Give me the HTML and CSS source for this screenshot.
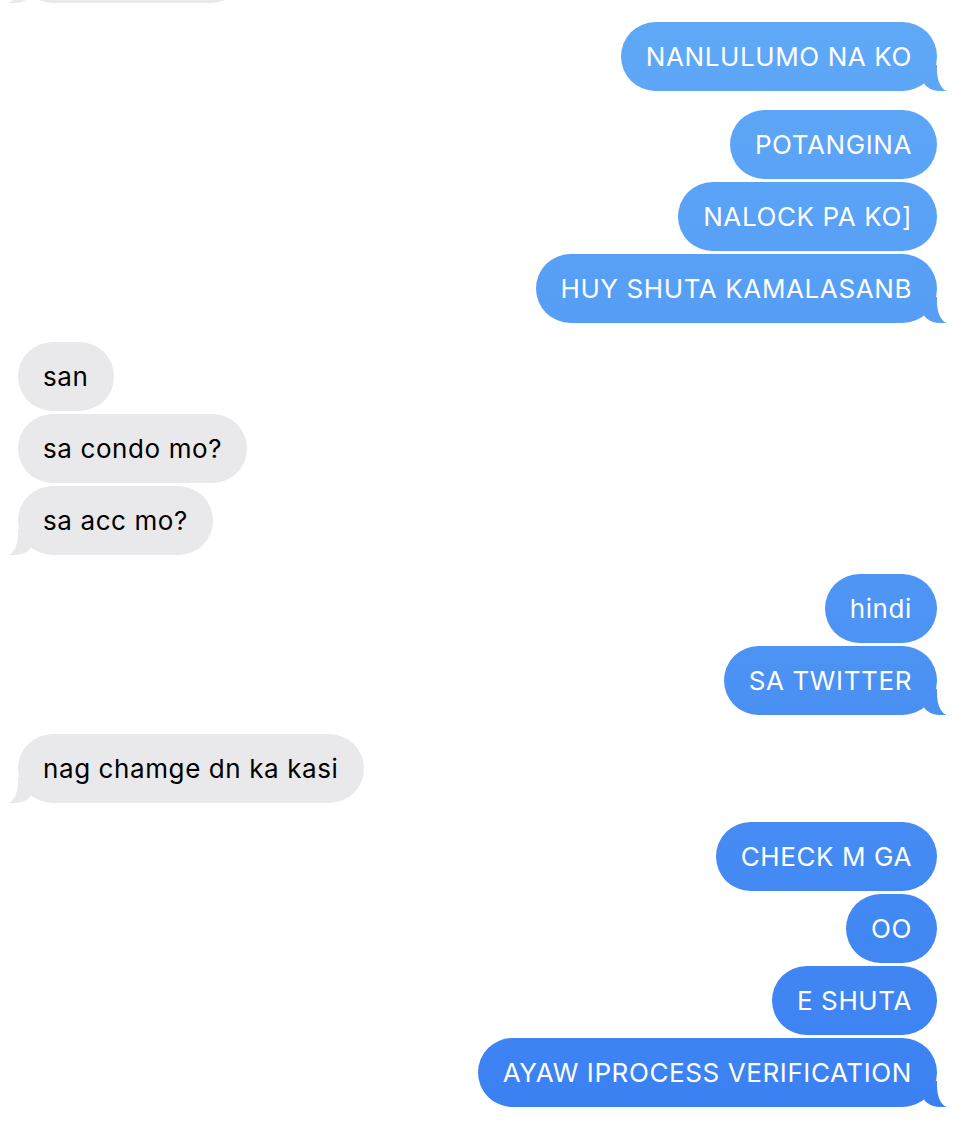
FILE: index.html
```html
<!DOCTYPE html>
<html lang="en">
<head>
<meta charset="UTF-8">
<meta name="viewport" content="width=device-width, initial-scale=1.0">
<title>Messages</title>
<link rel="stylesheet" href="styles.css">
</head>
<body>

  <div class="thread">
    <div class="group received offscreen">
      <div class="bubble tail"></div>
    </div>

    <div class="group sent">
      <div class="bubble tail">NANLULUMO NA KO</div>
    </div>

    <div class="group sent">
      <div class="bubble">POTANGINA</div>
      <div class="bubble">NALOCK PA KO]</div>
      <div class="bubble tail">HUY SHUTA KAMALASANB</div>
    </div>

    <div class="group received">
      <div class="bubble">san</div>
      <div class="bubble">sa condo mo?</div>
      <div class="bubble tail">sa acc mo?</div>
    </div>

    <div class="group sent">
      <div class="bubble">hindi</div>
      <div class="bubble tail">SA TWITTER</div>
    </div>

    <div class="group received">
      <div class="bubble tail">nag chamge dn ka kasi</div>
    </div>

    <div class="group sent">
      <div class="bubble">CHECK M GA</div>
      <div class="bubble">OO</div>
      <div class="bubble">E SHUTA</div>
      <div class="bubble tail">AYAW IPROCESS VERIFICATION</div>
    </div>
  </div>

</body>
</html>
```

FILE: styles.css
```css
* {
  box-sizing: border-box;
  margin: 0;
  padding: 0;
}

body {
  font-family: Inter, "Liberation Sans", Arial, sans-serif;
  background-color: #fff;
  overflow: hidden;
}

/* Thread */

.thread {
  display: flex;
  flex-direction: column;
  gap: 19px;
  padding: 0 39px 0 18px;
  margin-top: -66px;
}

.group {
  display: flex;
  flex-direction: column;
  gap: 3px;
}

.group.sent {
  align-items: flex-end;
}

.group.received {
  align-items: flex-start;
}

/* Bubbles */

.bubble {
  position: relative;
  height: 69px;
  line-height: 69px;
  padding: 0 25px 0 25px;
  border-radius: 35px;
  font-size: 26px;
  letter-spacing: 0.6px;
  white-space: nowrap;
}

.sent .bubble {
  color: #fff;
  background: linear-gradient(to bottom, #60a9f7 0%, #4d94f4 55%, #3b80f2 100%) fixed;
}

.received .bubble {
  color: #000;
  background-color: #e9e9eb;
}

.offscreen .bubble {
  width: 228px;
}

/* Tails */

.bubble.tail::before,
.bubble.tail::after {
  content: "";
  position: absolute;
  bottom: 0;
  height: 26px;
  width: 26px;
}

.sent .bubble.tail::before {
  right: -11px;
  background: linear-gradient(to bottom, #60a9f7 0%, #4d94f4 55%, #3b80f2 100%) fixed;
  border-bottom-left-radius: 18px 14px;
}

.sent .bubble.tail::after {
  right: -26px;
  background-color: #fff;
  border-bottom-left-radius: 11px 21px;
}

.received .bubble.tail::before {
  left: -11px;
  background-color: #e9e9eb;
  border-bottom-right-radius: 18px 14px;
}

.received .bubble.tail::after {
  left: -26px;
  background-color: #fff;
  border-bottom-right-radius: 11px 21px;
}
```
